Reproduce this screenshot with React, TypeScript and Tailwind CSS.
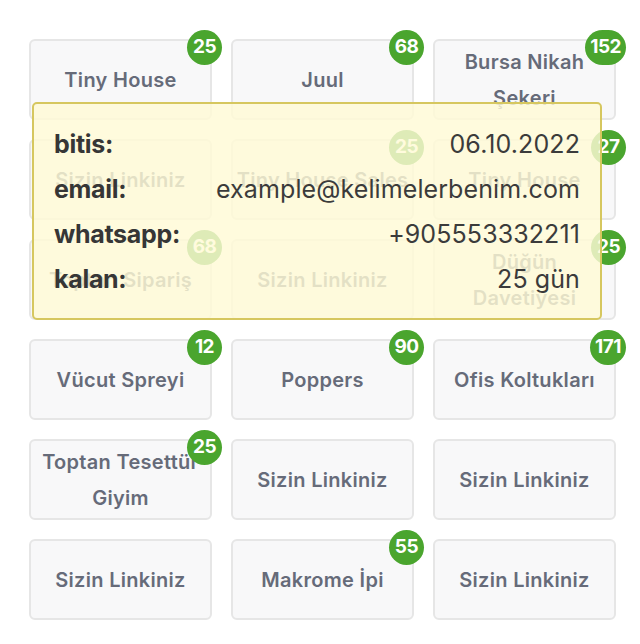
import React from "react";

type Item = { lines: string[]; badge?: string };

const items: Item[] = [
  { lines: ["Tiny House"], badge: "25" },
  { lines: ["Juul"], badge: "68" },
  { lines: ["Bursa Nikah", "Şekeri"], badge: "152" },
  { lines: ["Sizin Linkiniz"] },
  { lines: ["Tiny House Sales"], badge: "25" },
  { lines: ["Tiny House"], badge: "27" },
  { lines: ["Toptan Sipariş"], badge: "68" },
  { lines: ["Sizin Linkiniz"] },
  { lines: ["Düğün", "Davetiyesi"], badge: "25" },
  { lines: ["Vücut Spreyi"], badge: "12" },
  { lines: ["Poppers"], badge: "90" },
  { lines: ["Ofis Koltukları"], badge: "171" },
  { lines: ["Toptan Tesettür", "Giyim"], badge: "25" },
  { lines: ["Sizin Linkiniz"] },
  { lines: ["Sizin Linkiniz"] },
  { lines: ["Sizin Linkiniz"] },
  { lines: ["Makrome İpi"], badge: "55" },
  { lines: ["Sizin Linkiniz"] },
];

const rows = [
  { label: "bitis:", value: "06.10.2022" },
  { label: "email:", value: "example@kelimelerbenim.com" },
  { label: "whatsapp:", value: "+905553332211" },
  { label: "kalan:", value: "25 gün" },
];

export default function App() {
  return (
    <div
      className="relative w-[640px] h-[644px] bg-white overflow-hidden"
      style={{ fontFamily: "Inter, 'Noto Sans', sans-serif" }}
    >
      <div className="grid grid-cols-[repeat(3,183px)] gap-x-[19px] gap-y-[19px] pl-[29px] pt-[39px]">
        {items.map((it, i) => (
          <div
            key={i}
            className="relative h-[81px] rounded-[6px] border-2 border-[#e6e6e6] bg-[#f8f8f9] flex flex-col items-center justify-center text-center"
          >
            {it.lines.map((l, j) => (
              <div
                key={j}
                className="text-[20px] leading-[36px] font-semibold tracking-[0.3px] text-[#666b79] whitespace-nowrap"
              >
                {l}
              </div>
            ))}
            {it.badge && (
              <div className="absolute -top-[11px] -right-[12px] h-[35px] min-w-[35px] px-[5px] rounded-full bg-[#4aa52e] text-white text-[19px] font-bold flex items-center justify-center tracking-[-0.5px]">
                {it.badge}
              </div>
            )}
          </div>
        ))}
      </div>

      <div className="absolute left-[32px] top-[102px] w-[570px] h-[218px] rounded-[5px] border-2 border-[#d6c75f] bg-[rgba(255,250,214,0.82)] px-[20px] pt-[18px] pb-[16px]">
        {rows.map((r) => (
          <div key={r.label} className="flex items-center justify-between h-[45px]">
            <span className="text-[25px] font-bold tracking-[-0.3px] text-[#363636]">{r.label}</span>
            <span className="text-[25px] font-normal tracking-[0.1px] text-[#3b3b3b]">{r.value}</span>
          </div>
        ))}
      </div>
    </div>
  );
}
